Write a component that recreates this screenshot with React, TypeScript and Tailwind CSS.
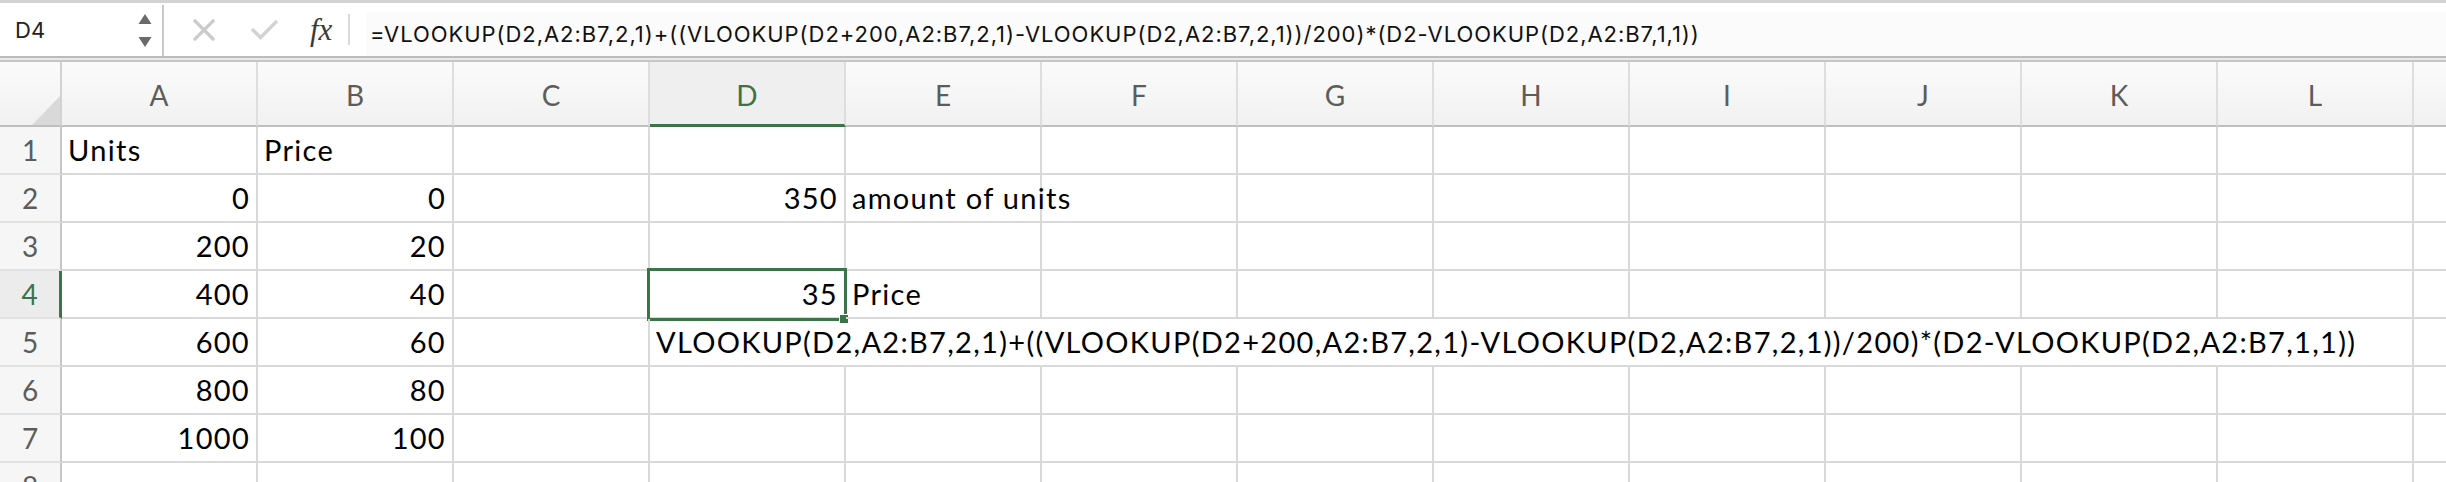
import React from "react";

const COLS = ["A", "B", "C", "D", "E", "F", "G", "H", "I", "J", "K", "L"];

type Cell = { v: string; right?: boolean };

const ROWS: Record<number, Record<string, Cell>> = {
  1: { A: { v: "Units" }, B: { v: "Price" } },
  2: { A: { v: "0", right: true }, B: { v: "0", right: true }, D: { v: "350", right: true }, E: { v: "amount of units" } },
  3: { A: { v: "200", right: true }, B: { v: "20", right: true } },
  4: { A: { v: "400", right: true }, B: { v: "40", right: true }, D: { v: "35", right: true }, E: { v: "Price" } },
  5: { A: { v: "600", right: true }, B: { v: "60", right: true } },
  6: { A: { v: "800", right: true }, B: { v: "80", right: true } },
  7: { A: { v: "1000", right: true }, B: { v: "100", right: true } },
  8: {},
};

const FORMULA =
  "VLOOKUP(D2,A2:B7,2,1)+((VLOOKUP(D2+200,A2:B7,2,1)-VLOOKUP(D2,A2:B7,2,1))/200)*(D2-VLOOKUP(D2,A2:B7,1,1))";

function Toolbar() {
  return (
    <div className="flex h-[62px] flex-col bg-white">
      <div className="h-[3px] bg-[#d3d3d3]" />
      <div className="flex h-[53px]">
        {/* name box */}
        <div className="mt-[2px] flex w-[164px] items-center justify-between border-r-2 border-[#c9c9c9] bg-white pl-[15px] pr-[10px]">
          <span className="font-['Inter',sans-serif] text-[22px] text-[#222]">D4</span>
          <svg width="14" height="34" viewBox="0 0 14 34">
            <path d="M7 0 L13.5 10 L0.5 10 Z" fill="#6b6b6b" />
            <path d="M0.5 23 L13.5 23 L7 33 Z" fill="#6b6b6b" />
          </svg>
        </div>
        {/* action icons */}
        <div className="flex w-[202px] items-center pl-[29px]">
          <svg width="22" height="22" viewBox="0 0 22 22">
            <path d="M2 2 L20 20 M20 2 L2 20" stroke="#cbcbcb" strokeWidth="3.2" strokeLinecap="square" />
          </svg>
          <svg className="ml-[35px]" width="29" height="21" viewBox="0 0 29 21">
            <path d="M2 10 L10.5 18.5 L27 2" stroke="#d3d3d3" strokeWidth="3.4" fill="none" />
          </svg>
          <span className="ml-[31px] font-['Liberation_Serif',serif] text-[31px] italic leading-none text-[#3a3a3a]">
            fx
          </span>
          <div className="ml-[16px] h-[31px] w-[2px] bg-[#dadada]" />
        </div>
        {/* formula input */}
        <div className="mt-[9px] flex flex-1 items-center bg-[#fbfbfb] pl-[4px]">
          <span className="whitespace-nowrap font-['Inter',sans-serif] text-[22px] tracking-[0.95px] text-[#111]">
            ={FORMULA}
          </span>
        </div>
      </div>
      <div className="h-[6px] border-t-2 border-b-2 border-t-[#bcbcbc] border-b-[#c6c6c6] bg-[#e9e9e9]" />
    </div>
  );
}

function HeaderRow() {
  return (
    <>
      <div className="relative h-[65px] border-r-2 border-b-2 border-r-[#d2d2d2] border-b-[#bfbfbf] bg-gradient-to-b from-[#fbfbfb] to-[#f1f1f1]">
        <svg className="absolute right-0 bottom-0" width="28" height="29" viewBox="0 0 28 29">
          <path d="M0 29 L28 0 L28 29 Z" fill="#d9d9d9" />
        </svg>
      </div>
      {COLS.map((c) =>
        c === "D" ? (
          <div
            key={c}
            className="flex h-[65px] items-end justify-center border-r-2 border-b-[3px] border-r-[#dedede] border-b-[#3a7448] bg-[#efefef] pb-[15px] text-[28px] leading-none text-[#3a7448]"
          >
            {c}
          </div>
        ) : (
          <div
            key={c}
            className="flex h-[65px] items-end justify-center border-r-2 border-b-2 border-r-[#dedede] border-b-[#bfbfbf] bg-gradient-to-b from-[#fbfbfb] to-[#f1f1f1] pb-[16px] text-[28px] leading-none text-[#5c5c5c]"
          >
            {c}
          </div>
        )
      )}
      <div className="h-[65px] border-b-2 border-b-[#bfbfbf] bg-gradient-to-b from-[#fbfbfb] to-[#f1f1f1]" />
    </>
  );
}

function RowHeader({ n }: { n: number }) {
  const active = n === 4;
  return (
    <div
      className={
        active
          ? "flex h-[48px] items-end justify-center border-r-[3px] border-b-2 border-r-[#3a7448] border-b-[#e2e2e2] bg-[#ececec] pb-[9px] text-[28px] leading-none text-[#3a7448]"
          : "flex h-[48px] items-end justify-center border-r-2 border-b-2 border-r-[#c6c6c6] border-b-[#e2e2e2] bg-[#f6f6f6] pb-[9px] text-[28px] leading-none text-[#5c5c5c]"
      }
    >
      {n}
    </div>
  );
}

function DataCell({ cell, selected }: { cell?: Cell; selected?: boolean }) {
  return (
    <div
      className={`relative flex h-[48px] items-end whitespace-nowrap border-r-2 border-b-2 border-[#d9d9d9] pb-[9px] text-[29px] leading-none tracking-[1.3px] text-black ${
        cell?.right ? "justify-end pr-[6px]" : "justify-start pl-[6px]"
      }`}
    >
      {cell?.v}
      {selected && (
        <>
          <div className="absolute -top-[3px] -left-[3px] h-[53px] w-[200px] border-[3px] border-[#3a7448]" />
          <div className="absolute top-[43px] left-[189px] h-[10px] w-[10px] border border-white bg-[#3a7448]" />
        </>
      )}
    </div>
  );
}

export default function App() {
  return (
    <div className="h-[482px] w-[2446px] overflow-hidden bg-white font-['Lato',sans-serif]">
      <Toolbar />
      <div className="grid grid-cols-[62px_repeat(12,196px)_1fr]">
        <HeaderRow />
        {[1, 2, 3, 4, 5, 6, 7, 8].map((r) => (
          <React.Fragment key={r}>
            <RowHeader n={r} />
            {r === 5 ? (
              <>
                {COLS.slice(0, 3).map((c) => (
                  <DataCell key={c} cell={ROWS[r][c]} />
                ))}
                <div className="col-span-9 flex h-[48px] items-end whitespace-nowrap border-r-2 border-b-2 border-[#d9d9d9] pb-[9px] pl-[6px] text-[29px] leading-none tracking-[1.3px] text-black">
                  {FORMULA}
                </div>
              </>
            ) : (
              COLS.map((c) => <DataCell key={c} cell={ROWS[r][c]} selected={r === 4 && c === "D"} />)
            )}
            <div className="h-[48px] border-b-2 border-[#d9d9d9]" />
          </React.Fragment>
        ))}
      </div>
    </div>
  );
}
